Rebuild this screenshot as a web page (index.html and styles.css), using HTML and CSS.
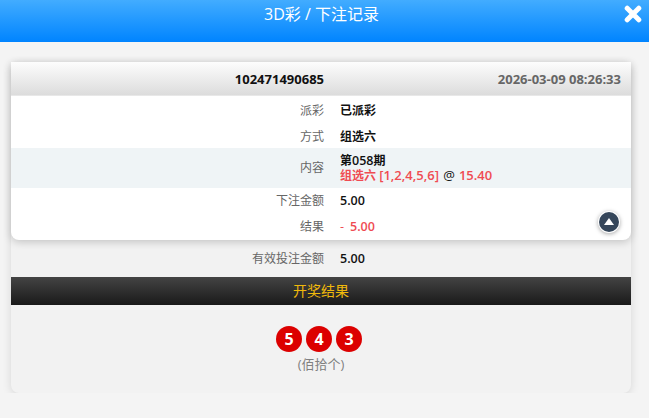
FILE: index.html
```html
<!DOCTYPE html>
<html lang="zh-CN">
<head>
  <meta charset="UTF-8" />
  <meta name="viewport" content="width=device-width, initial-scale=1.0"/>
  <title>3D彩 / 下注记录</title>
  <link rel="stylesheet" href="styles.css">
</head>
<body>
  <div class="topbar">
    <h1>3D彩 / 下注记录</h1>
    <svg class="close" viewBox="0 0 18 18" width="18" height="18" aria-label="关闭">
      <path d="M3.2 3.2 L14.8 14.8 M14.8 3.2 L3.2 14.8" stroke="#fff" stroke-width="5" stroke-linecap="round"/>
    </svg>
  </div>

  <div class="container">
    <div class="record">
      <div class="record-head">
        <span class="order">102471490685</span>
        <span class="time">2026-03-09 08:26:33</span>
      </div>
      <div class="row row-low"><span class="label">派彩</span><span class="value">已派彩</span></div>
      <div class="row row-low"><span class="label">方式</span><span class="value">组选六</span></div>
      <div class="row row-content">
        <span class="label">内容</span>
        <span class="value">第<span class="num">058</span>期<br><em>组选六 <span class="wide">[1,2,4,5,6]</span></em> <i class="wide">@</i> <em class="wide">15.40</em></span>
      </div>
      <div class="row"><span class="label">下注金额</span><span class="value num">5.00</span></div>
      <div class="row"><span class="label">结果</span><span class="value num"><em><b>-</b>5.00</em></span></div>
      <div class="to-top"></div>
    </div>
    <div class="row row-valid"><span class="label">有效投注金额</span><span class="value num">5.00</span></div>
    <div class="result-title">开奖结果</div>
    <div class="result">
      <div class="balls">
        <span class="ball">5</span>
        <span class="ball">4</span>
        <span class="ball">3</span>
      </div>
      <p class="places">(佰拾个)</p>
    </div>
  </div>
</body>
</html>
```

FILE: styles.css
```css
* {
  box-sizing: border-box;
}
body {
  margin: 0;
  background: #f4f4f4;
  font-family: "Open Sans", "Noto Sans", "Noto Sans CJK SC", sans-serif;
  font-size: 12px;
  color: #111;
}
.topbar {
  position: relative;
  height: 42px;
  padding: 3px 6px 0 0;
  background: linear-gradient(to bottom, #42acff, #0084ff);
  text-align: center;
}
.topbar h1 {
  margin: 0;
  font-size: 16px;
  line-height: 22px;
  font-weight: normal;
  color: #fff;
}
.close {
  position: absolute;
  top: 5px;
  right: 7px;
}
.container {
  margin: 20px 18px 0 11px;
  background: #f2f2f2;
  border-radius: 8px;
  box-shadow: 0 2px 10px rgba(0,0,0,0.12);
}
.record {
  position: relative;
  background: #fff;
  border-radius: 0 0 8px 8px;
  box-shadow: 0 2px 8px rgba(0,0,0,0.2);
}
.record-head {
  display: grid;
  grid-template-columns: 313px 1fr;
  height: 34px;
  align-items: center;
  background: linear-gradient(to bottom, #fdfdfd, #dcdcdc);
  border-bottom: 1px solid #e8e8e8;
  font-size: 13px;
  font-weight: bold;
}
.order {
  text-align: right;
}
.time {
  text-align: right;
  padding-right: 10px;
  color: #666;
}
.row {
  display: grid;
  grid-template-columns: 313px 1fr;
  column-gap: 16px;
  align-items: center;
  min-height: 26px;
  line-height: 14px;
}
.row-low {
  padding-top: 4px;
}
.label {
  text-align: right;
  color: #666;
}
.value {
  font-weight: 600;
  color: #111;
}
.num {
  font-size: 12.5px;
}
.wide {
  font-size: 13px;
}
.value em {
  font-style: normal;
  color: #ef4b52;
}
.value i {
  font-style: normal;
  font-weight: normal;
  margin: 0 1px;
}
.value b {
  font-weight: normal;
  margin-right: 6px;
}
.row-content {
  min-height: 40px;
  background: #eff4f6;
}
.row-valid {
  height: 37px;
}
.to-top {
  position: absolute;
  right: 12px;
  bottom: 8px;
  width: 20px;
  height: 20px;
  border-radius: 50%;
  background: #35465a;
  box-shadow: 0 0 0 1px #fff, 0 1px 4px 1px rgba(0,0,0,0.35);
}
.to-top::after {
  content: "";
  position: absolute;
  left: 5px;
  top: 6px;
  border-left: 5px solid transparent;
  border-right: 5px solid transparent;
  border-bottom: 7px solid #fff;
}
.result-title {
  height: 28px;
  line-height: 28px;
  text-align: center;
  font-size: 14px;
  color: #f0b90b;
  background: linear-gradient(to bottom, #444, #1a1a1a);
}
.result {
  height: 88px;
  padding-top: 21px;
  text-align: center;
}
.balls {
  display: flex;
  justify-content: center;
  gap: 4px;
  padding-right: 4px;
}
.ball {
  width: 26px;
  height: 26px;
  border-radius: 50%;
  background: #dc0000;
  color: #fff;
  font-size: 16px;
  font-weight: bold;
  line-height: 26px;
}
.places {
  margin: 4px 0 0;
  font-size: 13px;
  line-height: 16px;
  color: #808080;
}
```
